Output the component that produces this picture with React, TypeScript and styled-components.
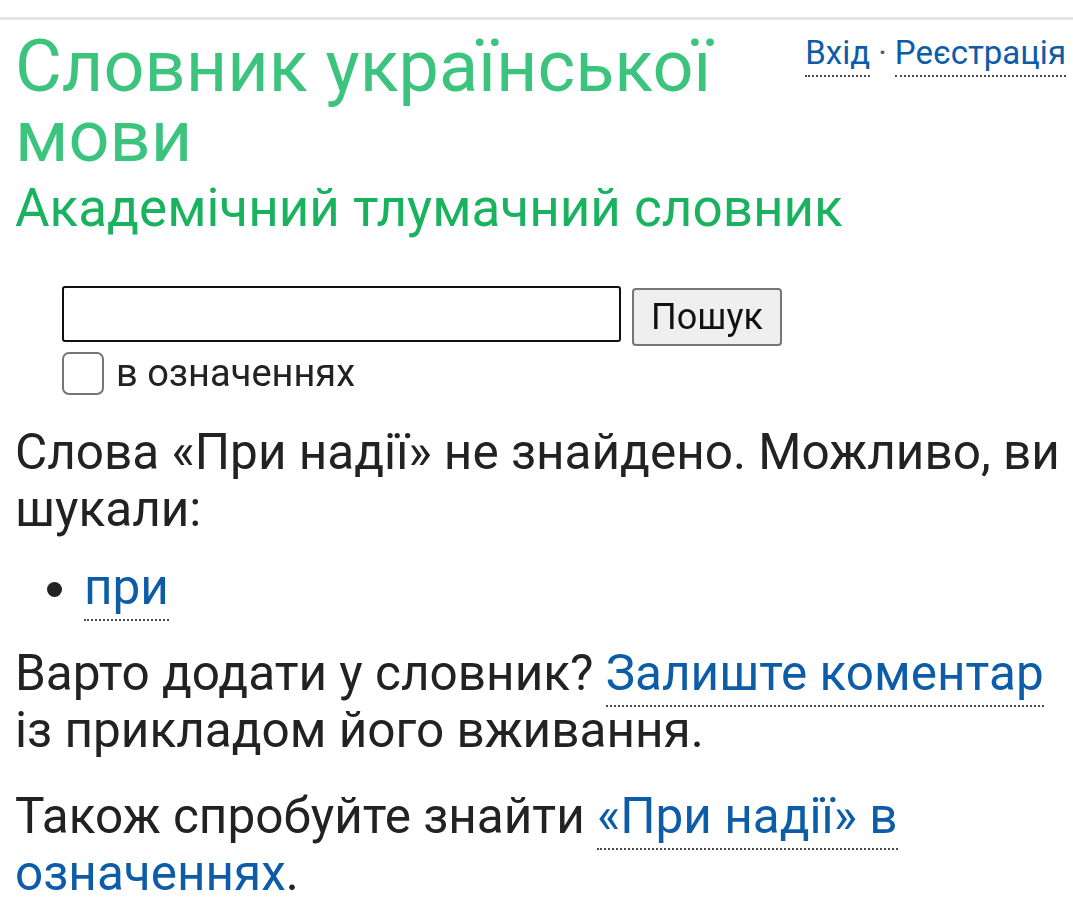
import React, { useState } from "react";
import styled, { createGlobalStyle } from "styled-components";

const GlobalStyle = createGlobalStyle`
  html, body {
    margin: 0;
    padding: 0;
    background: #ffffff;
  }
  body {
    font-family: Roboto, "Noto Sans", "Liberation Sans", sans-serif;
    color: #222222;
  }
`;

const TopLine = styled.div`
  margin-top: 17px;
  border-top: 3px solid #e4e4e4;
`;

const Page = styled.div`
  padding: 0 7px 0 15px;
`;

const Header = styled.header`
  display: flex;
  align-items: flex-start;
  justify-content: space-between;
  padding-top: 12px;
`;

const Title = styled.h1`
  margin: 0;
  flex: 0 1 760px;
  font-size: 72px;
  line-height: 70px;
  font-weight: 400;
  color: #3cc47f;
`;

const UserLinks = styled.div`
  display: flex;
  align-items: baseline;
  gap: 8px;
  padding-top: 2px;
  font-size: 33px;
  line-height: 38px;
  color: #555;
  white-space: nowrap;
`;

const Link = styled.a`
  color: #0d5ca8;
  text-decoration: none;
  border-bottom: 2px dotted #4a4a4a;
  padding-bottom: 3px;
  cursor: pointer;
`;

const Subtitle = styled.h2`
  margin: 8px 0 0;
  font-size: 53px;
  line-height: 56px;
  font-weight: 400;
  color: #19b25f;
`;

const SearchForm = styled.form`
  margin: 50px 0 0 47px;
`;

const SearchRow = styled.div`
  display: flex;
  align-items: flex-start;
  gap: 11px;
`;

const SearchInput = styled.input`
  box-sizing: border-box;
  width: 559px;
  height: 56px;
  border: 2.5px solid #111;
  border-radius: 3px;
  padding: 0 4px;
  font-size: 34px;
  font-family: inherit;
  outline: none;
`;

const SearchButton = styled.button`
  box-sizing: border-box;
  margin-top: 2px;
  width: 150px;
  height: 58px;
  background: #efefef;
  border: 2px solid #767676;
  border-radius: 4px;
  font-family: inherit;
  font-size: 36px;
  color: #111;
  padding: 0;
`;

const CheckRow = styled.label`
  display: flex;
  align-items: center;
  gap: 12px;
  margin-top: 6px;
  font-size: 38px;
  line-height: 43px;
  color: #222;
`;

const CheckBox = styled.span<{ $on: boolean }>`
  box-sizing: border-box;
  width: 42px;
  height: 43px;
  border: 2px solid #767676;
  border-radius: 7px;
  background: ${(p) => (p.$on ? "#0d5ca8" : "#fff")};
`;

const Text = styled.p`
  margin: 29px 0 0;
  font-size: 49.5px;
  line-height: 57px;
  color: #222;
`;

const Suggestions = styled.ul`
  margin: 21px 0 0;
  padding-left: 69px;
  font-size: 49.5px;
  line-height: 57px;
`;

export default function App() {
  const [query, setQuery] = useState("");
  const [inDefs, setInDefs] = useState(false);

  return (
    <>
      <GlobalStyle />
      <TopLine />
      <Page>
        <Header>
          <Title>Словник української мови</Title>
          <UserLinks>
            <Link>Вхід</Link>
            <span>·</span>
            <Link>Реєстрація</Link>
          </UserLinks>
        </Header>
        <Subtitle>Академічний тлумачний словник</Subtitle>

        <SearchForm onSubmit={(e) => e.preventDefault()}>
          <SearchRow>
            <SearchInput
              autoFocus
              value={query}
              onChange={(e) => setQuery(e.target.value)}
            />
            <SearchButton type="submit">Пошук</SearchButton>
          </SearchRow>
          <CheckRow onClick={() => setInDefs(!inDefs)}>
            <CheckBox $on={inDefs} />в означеннях
          </CheckRow>
        </SearchForm>

        <Text>Слова «При надії» не знайдено. Можливо, ви шукали:</Text>
        <Suggestions>
          <li>
            <Link>при</Link>
          </li>
        </Suggestions>
        <Text>
          Варто додати у словник? <Link>Залиште коментар</Link> із прикладом
          його вживання.
        </Text>
        <Text>
          Також спробуйте знайти <Link>«При надії» в означеннях</Link>.
        </Text>
      </Page>
    </>
  );
}
